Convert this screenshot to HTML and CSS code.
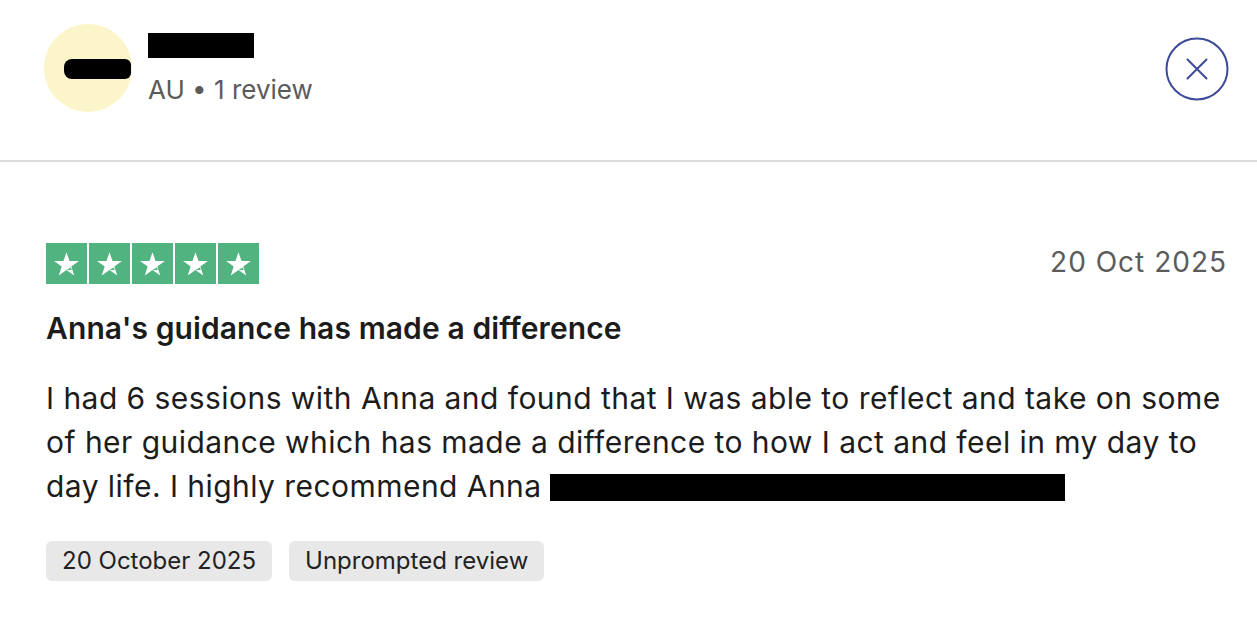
FILE: index.html
```html
<!DOCTYPE html>
<html lang="en">
<head>
<meta charset="utf-8">
<link rel="stylesheet" href="styles.css">
</head>
<body>
<div class="page">
  <header class="header">
    <div class="profile">
      <div class="avatar"><span class="redact redact-initials"></span></div>
      <div class="who">
        <div class="name"><span class="redact redact-name"></span></div>
        <div class="meta">AU • 1 review</div>
      </div>
    </div>
    <button class="close" aria-label="Close">
      <svg width="64" height="64" viewBox="0 0 64 64">
        <circle cx="32" cy="32" r="30.5" fill="none" stroke="#3d4b98" stroke-width="2"/>
        <path d="M22.5 22.5 L41.5 41.5 M41.5 22.5 L22.5 41.5" stroke="#3d4b98" stroke-width="2" stroke-linecap="round"/>
      </svg>
    </button>
  </header>
  <main class="review">
    <div class="review-top">
      <div class="stars">
        <span class="star"><svg viewBox="0 0 24 24"><path d="M12 3.2l2.35 6.9h7.25l-5.87 4.27 2.24 6.9L12 17.03l-5.97 4.24 2.24-6.9L2.4 10.1h7.25z" fill="#fff"/><path d="M15.4 15.1l0.6 1.9L12 17.03z" fill="#51b37f"/></svg></span>
        <span class="star"><svg viewBox="0 0 24 24"><path d="M12 3.2l2.35 6.9h7.25l-5.87 4.27 2.24 6.9L12 17.03l-5.97 4.24 2.24-6.9L2.4 10.1h7.25z" fill="#fff"/><path d="M15.4 15.1l0.6 1.9L12 17.03z" fill="#51b37f"/></svg></span>
        <span class="star"><svg viewBox="0 0 24 24"><path d="M12 3.2l2.35 6.9h7.25l-5.87 4.27 2.24 6.9L12 17.03l-5.97 4.24 2.24-6.9L2.4 10.1h7.25z" fill="#fff"/><path d="M15.4 15.1l0.6 1.9L12 17.03z" fill="#51b37f"/></svg></span>
        <span class="star"><svg viewBox="0 0 24 24"><path d="M12 3.2l2.35 6.9h7.25l-5.87 4.27 2.24 6.9L12 17.03l-5.97 4.24 2.24-6.9L2.4 10.1h7.25z" fill="#fff"/><path d="M15.4 15.1l0.6 1.9L12 17.03z" fill="#51b37f"/></svg></span>
        <span class="star"><svg viewBox="0 0 24 24"><path d="M12 3.2l2.35 6.9h7.25l-5.87 4.27 2.24 6.9L12 17.03l-5.97 4.24 2.24-6.9L2.4 10.1h7.25z" fill="#fff"/><path d="M15.4 15.1l0.6 1.9L12 17.03z" fill="#51b37f"/></svg></span>
      </div>
      <time class="date">20 Oct 2025</time>
    </div>
    <h2 class="title">Anna's guidance has made a difference</h2>
    <p class="body">I had 6 sessions with Anna and found that I was able to reflect and take on some of her guidance which has made a difference to how I act and feel in my day to day life. I highly recommend Anna <span class="redact redact-text"></span></p>
    <div class="tags">
      <span class="tag">20 October 2025</span>
      <span class="tag">Unprompted review</span>
    </div>
  </main>
</div>
</body>
</html>
```
FILE: styles.css
```css
* { box-sizing: border-box; }
html, body { margin: 0; padding: 0; background: #fff; }
body {
  font-family: Inter, "Noto Sans", sans-serif;
  color: #1c1c1c;
  width: 1257px;
  height: 641px;
  overflow: hidden;
}
.header {
  height: 162px;
  border-bottom: 2px solid #dcdcdc;
  display: flex;
  justify-content: space-between;
  align-items: flex-start;
  padding: 24px 28px 0 44px;
}
.profile { display: flex; align-items: flex-start; gap: 16px; }
.avatar {
  width: 88px; height: 88px;
  border-radius: 50%;
  background: #fcf5c9;
  display: flex; align-items: center; justify-content: center;
}
.redact { display: inline-block; background: #000; vertical-align: middle; }
.redact-initials { width: 67px; height: 20px; border-radius: 8px 6px 6px 8px; margin-left: 18px; margin-top: 2px; }
.who { padding-top: 9px; }
.name { height: 26px; line-height: 0; }
.redact-name { width: 106px; height: 25px; }
.meta {
  margin-top: 16px;
  font-size: 26px;
  line-height: 30px;
  color: #5b5b5b;
  letter-spacing: 0;
}
.close {
  margin-top: 13px;
  width: 64px; height: 64px;
  padding: 0; border: 0; background: none;
}
.close svg { display: block; }
.review { padding: 81px 22px 0 46px; }
.review-top { display: flex; justify-content: space-between; align-items: center; }
.stars { display: flex; gap: 2px; }
.star {
  width: 41px; height: 41px;
  background: #51b37f;
  display: flex; align-items: center; justify-content: center;
}
.star svg { width: 31px; height: 31px; }
.date { font-size: 28px; color: #5b5b5b; letter-spacing: 1px; margin-top: -4px; margin-right: 8px; }
.title {
  margin: 22px 0 0;
  font-size: 30px;
  line-height: 44px;
  font-weight: 600;
  letter-spacing: 0.1px;
}
.body {
  margin: 26px 0 0;
  font-size: 30px;
  line-height: 44px;
  letter-spacing: 0.45px;
}
.redact-text { width: 515px; height: 27px; vertical-align: -4px; }
.tags { display: flex; gap: 17px; margin-top: 33px; }
.tag {
  background: #e8e8e8;
  border-radius: 6px;
  height: 40px;
  padding: 0 16px;
  font-size: 24px;
  line-height: 40px;
  color: #222;
  letter-spacing: 0;
}
```
